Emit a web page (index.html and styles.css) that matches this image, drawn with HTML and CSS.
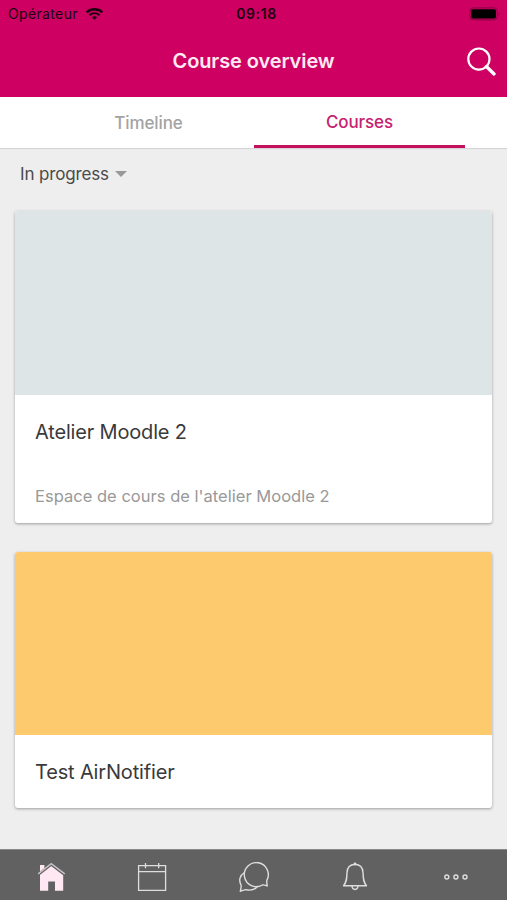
FILE: index.html
```html
<!DOCTYPE html>
<html lang="en">
<head>
  <meta charset="UTF-8">
  <meta name="viewport" content="width=device-width, initial-scale=1.0">
  <title>Course overview</title>
  <link rel="stylesheet" href="styles.css">
</head>
<body>
  <div class="app">
    <header class="header">
      <div class="status-bar">
        <div class="carrier">
          <span>Opérateur</span>
          <svg class="wifi" viewBox="0 0 17 12" width="17" height="12">
            <path d="M0.6 4.4C5 0.2 12 0.2 16.4 4.4" fill="none" stroke="#1c0010" stroke-width="2.4"/>
            <path d="M3.4 7.3C6.4 4.6 10.6 4.6 13.6 7.3" fill="none" stroke="#1c0010" stroke-width="2"/>
            <path d="M5.9 9.2C7.4 7.9 9.6 7.9 11.1 9.2L8.5 11.8Z" fill="#1c0010"/>
          </svg>
        </div>
        <div class="clock">09:18</div>
        <div class="battery-wrap">
          <svg class="battery" viewBox="0 0 32 14" width="32" height="14">
            <rect x="0.9" y="0.9" width="27.4" height="12" rx="3.2" fill="none" stroke="#850044" stroke-width="1"/>
            <rect x="2.2" y="2.2" width="24.8" height="9.4" rx="1.8" fill="#000"/>
            <path d="M29.6 5v4c1.4-.4 1.4-3.6 0-4z" fill="#850044"/>
          </svg>
        </div>
      </div>
      <div class="title-bar">
        <h1 class="title">Course overview</h1>
        <button class="search-btn" aria-label="Search">
          <svg viewBox="0 0 30 30" width="30" height="30" fill="none" stroke="#fff">
            <circle cx="12.9" cy="13.1" r="10.6" stroke-width="2.2"/>
            <path d="M20.4 20.6L28 27.9" stroke-width="3.4" stroke-linecap="round"/>
          </svg>
        </button>
      </div>
    </header>

    <nav class="tabs">
      <a class="tab">Timeline</a>
      <a class="tab active">Courses</a>
    </nav>

    <main class="content">
      <div class="filter">
        <span>In progress</span>
        <span class="arrow"></span>
      </div>
      <div class="course-card">
        <div class="course-image grey"></div>
        <div class="course-body">
          <h2>Atelier Moodle 2</h2>
          <p>Espace de cours de l'atelier Moodle 2</p>
        </div>
      </div>
      <div class="course-card">
        <div class="course-image yellow"></div>
        <div class="course-body">
          <h2>Test AirNotifier</h2>
        </div>
      </div>
    </main>

    <nav class="tab-bar">
      <a class="tab-item active">
        <svg viewBox="0 0 30 30" width="30" height="30">
          <path d="M4 3h4.4v4L4 10.6z" fill="#ffe8f2"/>
          <path d="M4 11.8L15.2 3.4 27.2 12.4V28.8H19V19.6H12.2V28.8H4z" fill="#ffe8f2"/>
          <path d="M2.4 12.4L15.2 2.4 28.4 12.4" fill="none" stroke="#616161" stroke-width="2.6"/>
          <path d="M2.2 11.8L15.2 1.6 28.8 11.8" fill="none" stroke="#c9c2c6" stroke-width="1.5"/>
        </svg>
      </a>
      <a class="tab-item">
        <svg viewBox="0 0 30 30" width="30" height="30" fill="none" stroke="#dedede" stroke-width="1.3">
          <path d="M1.6 3.7H28.6V28.4H1.6zM1.6 9.6H28.6M8.5 1V6.2M21.7 1V6.2"/>
        </svg>
      </a>
      <a class="tab-item">
        <svg viewBox="0 0 32 32" width="32" height="32" fill="none" stroke="#dedede" stroke-width="1.4" stroke-linejoin="round">
          <path d="M28.8 19.5A12 12 0 1 0 24.4 24C26 23.4 27.5 24.6 29.4 24.9C28.8 23.2 28.7 21.3 28.8 19.5z"/>
          <path d="M6.5 11.5C1.6 14.4.6 19.6 3 24C3.4 26 2.8 28 2.3 30.2C4.4 29.8 6 28.8 8 28.6C12.6 29.8 17.2 28.6 20 24.8"/>
        </svg>
      </a>
      <a class="tab-item">
        <svg viewBox="0 0 26 30" width="26" height="30" fill="none" stroke="#dedede" stroke-width="1.4" stroke-linejoin="round">
          <path d="M13 2.3C8 2.6 5.2 5.8 5 10.6C4.8 17.5 4.4 20.5 1.5 23.7H24.5C21.6 20.5 21.2 17.5 21 10.6C20.8 5.8 18 2.6 13 2.3z"/>
          <path d="M10 24C10.3 28.6 15.7 28.6 16 24"/>
          <circle cx="13" cy="2" r="1.4" fill="#dedede" stroke="none"/>
        </svg>
      </a>
      <a class="tab-item">
        <svg viewBox="0 0 26 30" width="26" height="30" fill="none" stroke="#dedede" stroke-width="1.4">
          <circle cx="3.8" cy="15" r="2"/>
          <circle cx="12.9" cy="15" r="2"/>
          <circle cx="22" cy="15" r="2"/>
        </svg>
      </a>
    </nav>
  </div>
</body>
</html>
```
FILE: styles.css
```css
* {
  box-sizing: border-box;
}

body {
  margin: 0;
  font-family: 'Inter', 'Liberation Sans', sans-serif;
  background-color: #eeeeee;
  color: #3a3a3a;
}

.app {
  display: flex;
  flex-direction: column;
  height: 900px;
  overflow: hidden;
}

/* Header */
.header {
  height: 97px;
  flex-shrink: 0;
  background: #ce0062;
}

.status-bar {
  display: grid;
  grid-template-columns: 1fr auto 1fr;
  align-items: center;
  height: 27px;
  padding: 0 6px 0 8px;
  color: #1c0010;
  font-size: 14px;
}

.carrier {
  display: flex;
  align-items: center;
  gap: 8px;
  letter-spacing: 0.35px;
}

.wifi {
  display: block;
}

.clock {
  padding-left: 4px;
  font-weight: 600;
  letter-spacing: 0.6px;
}

.battery-wrap {
  display: flex;
  justify-content: flex-end;
}

.title-bar {
  display: grid;
  grid-template-columns: 1fr auto 1fr;
  align-items: center;
  height: 68px;
  padding: 0 11px;
}

.title {
  grid-column: 2;
  margin: 0;
  font-size: 20px;
  font-weight: 600;
  letter-spacing: -0.1px;
  color: #ffeaf4;
}

.search-btn {
  justify-self: end;
  display: flex;
  padding: 0;
  border: none;
  background: none;
}

/* Tabs */
.tabs {
  display: flex;
  height: 51px;
  flex-shrink: 0;
  padding: 0 42px 0 43px;
  background: white;
  box-shadow: 0 1px 1px rgba(0, 0, 0, 0.1);
}

.tab {
  flex: 1;
  text-align: center;
  line-height: 53px;
  font-size: 17px;
  font-weight: 500;
  letter-spacing: -0.1px;
  color: #a3a3a3;
}

.tab.active {
  line-height: 50px;
  color: #c6216f;
  border-bottom: 3px solid #c4115f;
}

/* Courses */
.content {
  flex: 1;
  padding: 0 15px;
}

.filter {
  display: flex;
  align-items: center;
  gap: 6px;
  height: 63px;
  padding: 0 5px 12px;
  font-size: 17px;
  letter-spacing: -0.15px;
  color: #4a4a4a;
}

.arrow {
  border-left: 6.5px solid transparent;
  border-right: 6.5px solid transparent;
  border-top: 6.5px solid #999;
}

.course-card {
  margin-bottom: 29px;
  background: white;
  border-radius: 3px;
  overflow: hidden;
  box-shadow: 0 1px 3px rgba(0, 0, 0, 0.35);
}

.course-image {
  height: 184px;
}

.course-image.grey {
  background: #dee5e7;
}

.course-image.yellow {
  height: 183px;
  background: #fdcb6e;
}

.course-body {
  padding: 25px 20px 24px;
}

.course-body h2 {
  margin: 0;
  font-size: 20px;
  line-height: 24px;
  font-weight: 400;
  letter-spacing: -0.17px;
}

.course-body p {
  margin: 42px 0 -7px;
  font-size: 16.5px;
  line-height: 20px;
  letter-spacing: 0.02px;
  color: #999;
}

/* Bottom navigation */
.tab-bar {
  display: flex;
  height: 51px;
  flex-shrink: 0;
  background: #616161;
  border-top: 1px solid #888;
}

.tab-item {
  flex: 1;
  display: flex;
  align-items: center;
  justify-content: center;
  padding-top: 3px;
}
```
